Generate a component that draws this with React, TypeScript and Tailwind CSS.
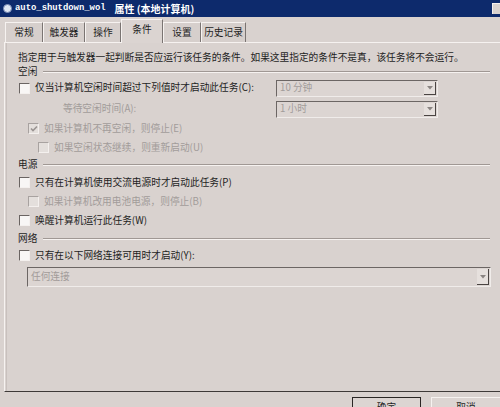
import React from "react";

const FONT = { fontFamily: '"Noto Sans CJK SC", "Liberation Sans", sans-serif' };

function Check({ checked = false, disabled = false }: { checked?: boolean; disabled?: boolean }) {
  return (
    <div className={`relative w-[11px] h-[11px] shrink-0 border-t border-l ${disabled ? "border-[#a8a2a0]" : "border-[#6a6462]"} border-r border-b border-r-[#f4f0ee] border-b-[#f4f0ee] ${disabled ? "bg-[#e4dfdc]" : "bg-[#f8f6f5]"}`}>
      {checked && (
        <svg className="absolute left-[1px] top-[1px]" width="8" height="8" viewBox="0 0 8 8">
          <path d="M1 3.5 L3 5.5 L7 1.5" fill="none" stroke={disabled ? "#9a9492" : "#222"} strokeWidth="1.6" />
        </svg>
      )}
    </div>
  );
}

function Row({ indent, h, children }: { indent: string; h: string; children: React.ReactNode }) {
  return <div className={`flex items-center ${indent} ${h}`}>{children}</div>;
}

function Section({ label, h }: { label: string; h: string }) {
  return (
    <div className={`flex items-center ${h}`}>
      <span className="text-[#1e1e1e]">{label}</span>
      <div className="flex-1 ml-[6px] mr-[10px] flex flex-col">
        <div className="h-px bg-[#a09894]" />
        <div className="h-px bg-[#f6f2f0]" />
      </div>
    </div>
  );
}

function Combo({ text, cls }: { text: string; cls: string }) {
  return (
    <div className={`flex items-stretch border-t border-l border-[#6c6664] border-r border-b border-r-[#f0ecea] border-b-[#f0ecea] bg-[#dcd5d2] ${cls}`}>
      <div className="flex-1 flex items-center pl-[3px] text-[#a29c9a]">{text}</div>
      <div className="w-[12px] my-[1px] mr-[1px] bg-[#e6e0dd] border-r border-b border-[#4a4442] flex items-center justify-center">
        <svg width="6" height="4" viewBox="0 0 6 4">
          <path d="M0 0 H6 L3 3.5 Z" fill="#8a8482" />
        </svg>
      </div>
    </div>
  );
}

function Tab({ label, active = false, w }: { label: string; active?: boolean; w: string }) {
  return (
    <div
      className={`${w} flex items-center justify-center border-t border-l border-[#f6f2f0] border-r border-r-[#7a7472] ${
        active ? "h-[24px] bg-[#dbd4d1] -mb-px relative z-10 pb-[3px]" : "h-[20px] bg-[#d6cfcc]"
      } text-[#1e1e1e]`}
    >
      {label}
    </div>
  );
}

export default function App() {
  return (
    <div className="w-[500px] h-[407px] overflow-hidden bg-[#d9d2cf] text-[9.7px] leading-none" style={FONT}>
      {/* title bar */}
      <div className="h-[17px] bg-[#0d2a6c] flex items-center pl-[3px] relative">
        <div className="w-[9px] h-[9px] rounded-full bg-[#dfe6f2] border border-[#7a8cb6] mr-[3px]" />
        <span className="text-white font-bold text-[8.9px]" style={{ fontFamily: '"Liberation Mono", monospace' }}>
          auto_shutdown_wol
        </span>
        <span className="text-white font-bold text-[10px] ml-[9px]">属性 (本地计算机)</span>
        <div className="absolute right-0 top-[3px] w-[8px] h-[11px] bg-[#d9d2cf] border-l border-t border-[#f4f0ee]" />
      </div>

      {/* tabs */}
      <div className="flex items-end h-[25px] pl-[5px]">
        <Tab label="常规" w="w-[38px]" />
        <Tab label="触发器" w="w-[42px]" />
        <Tab label="操作" w="w-[36px]" />
        <Tab label="条件" w="w-[42px]" active />
        <Tab label="设置" w="w-[38px]" />
        <Tab label="历史记录" w="w-[45px]" />
      </div>

      {/* panel */}
      <div className="ml-[4px] h-[350px] border-t border-l border-[#f6f2f0] border-b border-b-[#3e3a38] flex">
        <div className="w-[2px] border-r border-[#c8c0bd]" />
        <div className="flex-1 pl-[11px] flex flex-col">
          <div className="h-[23px] flex items-end pb-[3px] text-[#1e1e1e] whitespace-nowrap">
            指定用于与触发器一起判断是否应运行该任务的条件。如果这里指定的条件不是真，该任务将不会运行。
          </div>
          <Section label="空闲" h="h-[11px]" />
          <div className="flex items-center h-[22px]">
            <div className="flex items-center w-[258px] pl-[1px]">
              <Check />
              <span className="ml-[5px] text-[#1e1e1e]">仅当计算机空闲时间超过下列值时才启动此任务(C):</span>
            </div>
            <Combo text="10 分钟" cls="w-[162px] h-[17px]" />
          </div>
          <div className="flex items-center h-[20px]">
            <div className="w-[258px] pl-[45px] text-[#a29c9a]">等待空闲时间(A):</div>
            <Combo text="1 小时" cls="w-[162px] h-[17px]" />
          </div>
          <Row indent="pl-[10px]" h="h-[19px]">
            <Check checked disabled />
            <span className="ml-[5px] text-[#a29c9a]">如果计算机不再空闲，则停止(E)</span>
          </Row>
          <Row indent="pl-[20px]" h="h-[19px]">
            <Check disabled />
            <span className="ml-[5px] text-[#a29c9a]">如果空闲状态继续，则重新启动(U)</span>
          </Row>
          <Section label="电源" h="h-[16px]" />
          <Row indent="pl-[1px]" h="h-[19px]">
            <Check />
            <span className="ml-[5px] text-[#1e1e1e]">只有在计算机使用交流电源时才启动此任务(P)</span>
          </Row>
          <Row indent="pl-[10px]" h="h-[19px]">
            <Check disabled />
            <span className="ml-[5px] text-[#a29c9a]">如果计算机改用电池电源，则停止(B)</span>
          </Row>
          <Row indent="pl-[1px]" h="h-[19px]">
            <Check />
            <span className="ml-[5px] text-[#1e1e1e]">唤醒计算机运行此任务(W)</span>
          </Row>
          <Section label="网络" h="h-[17px]" />
          <Row indent="pl-[1px]" h="h-[17px]">
            <Check />
            <span className="ml-[5px] text-[#1e1e1e]">只有在以下网络连接可用时才启动(Y):</span>
          </Row>
          <div className="pl-[9px] pt-[3px]">
            <Combo text="任何连接" cls="w-[464px] h-[20px]" />
          </div>
        </div>
      </div>

      {/* buttons */}
      <div className="flex pl-[352px] pt-[5px] gap-[10px]">
        <div className="w-[70px] h-[20px] border border-[#2a2624] bg-[#dcd5d2] flex justify-center pt-[5px] text-[#1e1e1e]">确定</div>
        <div className="w-[70px] h-[20px] border-t border-l border-[#f6f2f0] bg-[#dcd5d2] flex justify-center pt-[5px] text-[#1e1e1e]">取消</div>
      </div>
    </div>
  );
}
